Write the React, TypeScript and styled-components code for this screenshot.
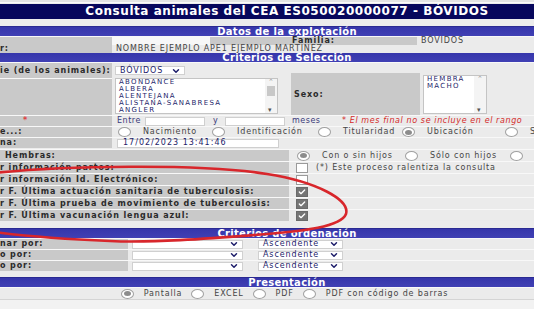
import React from 'react';
import styled, { createGlobalStyle } from 'styled-components';
import { ChevronDown, Check } from 'lucide-react';

const BREEDS = ['ABONDANCE', 'ALBERA', 'ALENTEJANA', 'ALISTANA-SANABRESA', 'ANGLER'];

const ORIGEN = [
  { id: 1, text: 'Nacimiento', w: 94, on: false },
  { id: 2, text: 'Identificación', w: 106, on: false },
  { id: 3, text: 'Titularidad', w: 84, on: false },
  { id: 4, text: 'Ubicación', w: 103, on: true },
  { id: 5, text: 'Supuesta', w: 90, on: false },
];

const HEMBRAS = [
  { id: 1, text: 'Con o sin hijos', w: 108, on: true },
  { id: 2, text: 'Sólo con hijos', w: 105, on: false },
  { id: 3, text: 'Sin hijos', w: 80, on: false },
];

const CHECK_ROWS = [
  { id: 1, label: 'r información partos:', checked: false, note: '(*) Este proceso ralentiza la consulta' },
  { id: 2, label: 'r información Id. Electrónico:', checked: false },
  { id: 3, label: 'r F. Última actuación sanitaria de tuberculosis:', checked: true },
  { id: 4, label: 'r F. Última prueba de movimiento de tuberculosis:', checked: true },
  { id: 5, label: 'r F. Última vacunación lengua azul:', checked: true },
];

const ORDER_ROWS = [
  { id: 1, label: 'nar por:' },
  { id: 2, label: 'o por:' },
  { id: 3, label: 'o por:' },
];

const FORMATS = [
  { id: 1, text: 'Pantalla', on: true },
  { id: 2, text: 'EXCEL', on: false },
  { id: 3, text: 'PDF', on: false },
  { id: 4, text: 'PDF con código de barras', on: false },
];

const App = () => {
  return (
    <>
      <GlobalStyle />
      <Page>
        <TitleBar>Consulta animales del CEA ES050020000077 - BÓVIDOS</TitleBar>

        <SectionBar>Datos de la explotación</SectionBar>
        <Row $cols="112px 98px 207px 1fr" $h={8}>
          <Label />
          <Value $bg="#f7f7f7" />
          <Label $center>Familia:</Label>
          <Value>BÓVIDOS</Value>
        </Row>
        <Row $cols="112px 1fr" $h={8}>
          <Label>r:</Label>
          <Value>NOMBRE EJEMPLO APE1 EJEMPLO MARTINEZ</Value>
        </Row>

        <SectionBar>Criterios de Selección</SectionBar>
        <EspecieBlock>
          <Label style={{ gridColumn: 1, gridRow: 1 }}>ie (de los animales):</Label>
          <Label style={{ gridColumn: 1, gridRow: 2 }} />
          <Select $w={70} style={{ gridColumn: 3, gridRow: 1 }}>
            <span>BÓVIDOS</span>
            <ChevronDown size={10} strokeWidth={3.5} color="#1d1d6a" />
          </Select>
          <ListBox style={{ gridColumn: 3, gridRow: 2 }} $h={36}>
            <ListItems>
              {BREEDS.map((b) => (
                <li key={b}>{b}</li>
              ))}
            </ListItems>
            <ScrollBar $thumb />
          </ListBox>
          <SexoCell>Sexo:</SexoCell>
          <SexoList $h={39}>
            <ListItems>
              <li>HEMBRA</li>
              <li>MACHO</li>
            </ListItems>
            <ScrollBar />
          </SexoList>
        </EspecieBlock>

        <Row $cols="112px 1fr" $h={11}>
          <Label>
            <Star>*</Star>
          </Label>
          <Value $pl={5}>
            <NavyText $w={28}>Entre</NavyText>
            <TextBox $w={60} />
            <NavyText $w={20} $pl={8}>y</NavyText>
            <TextBox $w={60} />
            <NavyText $w={57} $pl={7}>meses</NavyText>
            <Warning>* El mes final no se incluye en el rango</Warning>
          </Value>
        </Row>
        <Row $cols="112px 1fr" $h={11}>
          <Label>e...:</Label>
          <Value $pl={6}>
            {ORIGEN.map(({ id, text, w, on }) => (
              <Option key={id} $w={w}>
                <Radio $on={on} />
                {text}
              </Option>
            ))}
          </Value>
        </Row>
        <Row $cols="112px 1fr" $h={11}>
          <Label>na:</Label>
          <Value $pl={5}>
            <TextBox $w={162}>17/02/2023 13:41:46</TextBox>
          </Value>
        </Row>

        <Spacer $h={1} />

        <Row $cols="289px 1fr" $h={12}>
          <Label $pl={5}>Hembras:</Label>
          <Value $pl={8}>
            {HEMBRAS.map(({ id, text, w, on }) => (
              <Option key={id} $w={w}>
                <Radio $on={on} />
                {text}
              </Option>
            ))}
          </Value>
        </Row>
        {CHECK_ROWS.map(({ id, label, checked, note }) => (
          <Row key={id} $cols="289px 1fr" $h={12}>
            <Label>{label}</Label>
            <Value $pl={7}>
              <CheckBox $on={checked}>
                {checked && <Check size={8} strokeWidth={4} color="#fff" />}
              </CheckBox>
              {note && <Note>{note}</Note>}
            </Value>
          </Row>
        ))}

        <Spacer $h={7} />

        <SectionBar>Criterios de ordenación</SectionBar>
        {ORDER_ROWS.map(({ id, label }) => (
          <Row key={id} $cols="128px 1fr" $h={11}>
            <Label>{label}</Label>
            <Value $pl={4}>
              <Select $w={111} $end>
                <ChevronDown size={10} strokeWidth={3.5} color="#1d1d6a" />
              </Select>
              <Gap $w={15} />
              <Select $w={85}>
                <span>Ascendente</span>
                <ChevronDown size={10} strokeWidth={3.5} color="#1d1d6a" />
              </Select>
            </Value>
          </Row>
        ))}

        <Spacer $h={6} />

        <SectionBar>Presentación</SectionBar>
        <Row $cols="1fr" $h={12}>
          <Value $center>
            {FORMATS.map(({ id, text, on }) => (
              <FormatOption key={id}>
                <Radio $on={on} />
                {text}
              </FormatOption>
            ))}
          </Value>
        </Row>
        <Footer />

        <Marker viewBox="0 0 574 309" width="574" height="309">
          <path
            d="M -6 173 C 60 166, 200 163, 267 174 C 318 182, 350 200, 346 214 C 341 227, 302 231, 267 234 C 205 239, 150 243, 110 241 C 60 239, 25 236, -6 232"
            fill="none"
            stroke="#d8262b"
            strokeWidth="2.6"
            strokeLinecap="round"
          />
        </Marker>
      </Page>
    </>
  );
};

export default App;

const GlobalStyle = createGlobalStyle`
  html, body {
    margin: 0;
    padding: 0;
    background-color: #ececec;
    overflow: hidden;
  }
  body {
    font-family: 'DejaVu Sans', Verdana, sans-serif;
  }
`;

const Page = styled.div`
  position: relative;
  width: 574px;
  height: 309px;
  box-sizing: border-box;
  padding-top: 4px;
  background: linear-gradient(#e4e4e4 0, #e4e4e4 2px, #fafafa 2px, #fafafa 3px, #ececec 3px);
  background-size: 100% 4px;
  background-repeat: no-repeat;
  background-color: #ececec;
`;

const TitleBar = styled.div`
  height: 15px;
  margin-bottom: 7px;
  background-color: #07075c;
  color: #fff;
  font-weight: bold;
  font-size: 12px;
  line-height: 15px;
  text-align: center;
  letter-spacing: 0.55px;
  white-space: nowrap;
`;

const SectionBar = styled.div`
  height: 10px;
  box-sizing: border-box;
  border-top: 1px solid #2a2a92;
  background: linear-gradient(#3636ab, #4040b4);
  color: #fff;
  font-weight: bold;
  font-size: 10px;
  line-height: 9px;
  text-align: center;
  letter-spacing: 0.3px;
  white-space: nowrap;
`;

const Row = styled.div<{ $cols: string; $h: number }>`
  display: grid;
  grid-template-columns: ${({ $cols }) => $cols};
  height: ${({ $h }) => $h}px;
  box-sizing: border-box;
  border-top: 1px solid #f8f8f8;
`;

const Label = styled.div<{ $center?: boolean; $pl?: number }>`
  display: flex;
  align-items: center;
  justify-content: ${({ $center }) => ($center ? 'center' : 'flex-start')};
  padding-left: ${({ $pl }) => $pl ?? 0}px;
  background-color: #c9c9c9;
  color: #2b2b2b;
  font-weight: bold;
  font-size: 8px;
  line-height: 1;
  letter-spacing: 0.9px;
  white-space: nowrap;
`;

const Value = styled.div<{ $bg?: string; $pl?: number; $center?: boolean }>`
  display: flex;
  align-items: center;
  justify-content: ${({ $center }) => ($center ? 'center' : 'flex-start')};
  padding-left: ${({ $pl }) => $pl ?? 4}px;
  background-color: ${({ $bg }) => $bg ?? '#ebebeb'};
  color: #454545;
  font-size: 8px;
  line-height: 1;
  letter-spacing: 0.85px;
  white-space: nowrap;
`;

const EspecieBlock = styled.div`
  display: grid;
  grid-template-columns: 112px 3px 163px 13px 129px 3px 64px 1fr;
  grid-template-rows: 15px 37px;
  background-color: #ebebeb;
  border-top: 1px solid #f8f8f8;

  & > ${Label}:nth-of-type(2) {
    border-top: 1px solid #f8f8f8;
  }
`;

const Select = styled.div<{ $w: number; $end?: boolean }>`
  display: flex;
  align-items: center;
  justify-content: ${({ $end }) => ($end ? 'flex-end' : 'space-between')};
  align-self: center;
  width: ${({ $w }) => $w}px;
  height: 9px;
  box-sizing: border-box;
  padding: 0 3px 0 4px;
  background-color: #fff;
  border: 1px solid #d0d0d0;
  color: #1d1d6a;
  font-size: 8px;
  line-height: 1;
  letter-spacing: 0.9px;
`;

const ListBox = styled.div<{ $h: number }>`
  display: flex;
  height: ${({ $h }) => $h}px;
  box-sizing: border-box;
  background-color: #fff;
  border: 1px solid #c4c4c4;
  overflow: hidden;
`;

const SexoList = styled(ListBox)`
  grid-column: 7;
  grid-row: 1 / 3;
  align-self: end;
  margin-bottom: 1px;
`;

const ListItems = styled.ul`
  flex: 1;
  margin: 0;
  padding: 0 0 0 3px;
  list-style: none;
  color: #1d1d6a;
  font-size: 7px;
  line-height: 7.1px;
  letter-spacing: 1.3px;
`;

const ScrollBar = styled.div<{ $thumb?: boolean }>`
  position: relative;
  width: 12px;
  background-color: #f4f4f4;
  background-image: ${({ $thumb }) =>
    $thumb ? 'linear-gradient(#c8c8c8, #c8c8c8)' : 'none'};
  background-size: 8px 10px;
  background-position: 2px 7px;
  background-repeat: no-repeat;

  &::before {
    content: '⌃';
    position: absolute;
    top: -1px;
    left: 3px;
    font-size: 7px;
    color: #999;
  }
  &::after {
    content: '▾';
    position: absolute;
    bottom: -1px;
    left: 3px;
    font-size: 7px;
    color: #555;
  }
`;

const SexoCell = styled.div`
  grid-column: 5;
  grid-row: 1 / 3;
  align-self: end;
  height: 42px;
  display: flex;
  align-items: center;
  padding-left: 3px;
  background-color: #c9c9c9;
  color: #2b2b2b;
  font-weight: bold;
  font-size: 8px;
  letter-spacing: 0.9px;
`;

const Star = styled.span`
  padding-left: 23px;
  color: #e04040;
`;

const NavyText = styled.span<{ $w: number; $pl?: number }>`
  flex: none;
  width: ${({ $w }) => $w}px;
  padding-left: ${({ $pl }) => $pl ?? 0}px;
  box-sizing: border-box;
  color: #3a3a7a;
  letter-spacing: 0.5px;
`;

const TextBox = styled.span<{ $w: number }>`
  flex: none;
  display: flex;
  align-items: center;
  width: ${({ $w }) => $w}px;
  height: 9px;
  box-sizing: border-box;
  padding-left: 5px;
  background-color: #fff;
  border: 1px solid #cfcfcf;
  color: #1d1d6a;
  font-size: 8px;
  letter-spacing: 1px;
`;

const Warning = styled.span`
  color: #d42a2a;
  font-style: italic;
  letter-spacing: 0.6px;
`;

const Option = styled.span<{ $w: number }>`
  flex: none;
  display: inline-flex;
  align-items: center;
  gap: 12px;
  width: ${({ $w }) => $w}px;
`;

const FormatOption = styled.span`
  display: inline-flex;
  align-items: center;
  gap: 10px;
  margin-right: 9px;
`;

const Radio = styled.span<{ $on?: boolean }>`
  flex: none;
  display: inline-flex;
  align-items: center;
  justify-content: center;
  width: 13px;
  height: 10px;
  box-sizing: border-box;
  border-radius: 50%;
  border: 1px solid #a0a0a0;
  background-color: #fff;

  &::after {
    content: '';
    width: 7px;
    height: 5px;
    border-radius: 50%;
    background-color: ${({ $on }) => ($on ? '#8c8c8c' : 'transparent')};
  }
`;

const CheckBox = styled.span<{ $on?: boolean }>`
  flex: none;
  display: inline-flex;
  align-items: center;
  justify-content: center;
  width: 12px;
  height: 10px;
  box-sizing: border-box;
  border: 1px solid ${({ $on }) => ($on ? '#6a6a6a' : '#9a9a9a')};
  background-color: ${({ $on }) => ($on ? '#757575' : '#fff')};
`;

const Note = styled.span`
  margin-left: 8px;
`;

const Gap = styled.span<{ $w: number }>`
  flex: none;
  width: ${({ $w }) => $w}px;
`;

const Spacer = styled.div<{ $h: number }>`
  height: ${({ $h }) => $h}px;
`;

const Footer = styled.div`
  height: 10px;
  border-top: 1px solid #d4d4d4;
  background-color: #f2f2f2;
`;

const Marker = styled.svg`
  position: absolute;
  top: 0;
  left: 0;
  pointer-events: none;
`;
